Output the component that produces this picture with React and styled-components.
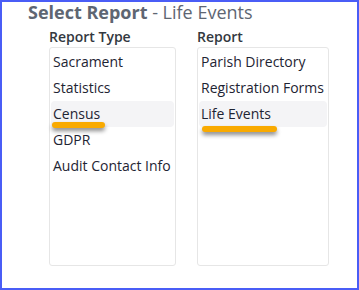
import React from "react";
import styled, { createGlobalStyle } from "styled-components";

const Global = createGlobalStyle`
  html, body { margin: 0; padding: 0; background: #fff; }
  body { font-family: "Open Sans", "Noto Sans", sans-serif; }
  * { box-sizing: border-box; }
`;

const Frame = styled.div`
  width: 359px;
  height: 290px;
  border: 2px solid #4a5df6;
  background: #fff;
  overflow: hidden;
`;

const Title = styled.h1`
  margin: 0 0 0 26px;
  font-size: 18px;
  line-height: 20px;
  font-weight: 400;
  color: #5e6672;
  white-space: nowrap;
`;

const TitleStrong = styled.span`
  font-weight: 700;
`;

const Columns = styled.div`
  display: flex;
  gap: 21px;
  margin: 5px 0 0 47px;
`;

const Column = styled.div`
  display: flex;
  flex-direction: column;
  width: ${(p) => p.$width}px;
`;

const Label = styled.div`
  font-size: 14px;
  line-height: 19px;
  font-weight: 600;
  color: #333840;
  margin-bottom: 1px;
`;

const ListBox = styled.div`
  height: 219px;
  border: 1px solid #e6e6e6;
  border-radius: 3px;
  padding: 1px;
  display: flex;
  flex-direction: column;
`;

const Item = styled.div`
  position: relative;
  height: 26px;
  padding: 3px 2px;
  font-size: 14px;
  line-height: 20px;
  color: #1e2433;
  border-radius: 4px;
  white-space: nowrap;
  background: ${(p) => (p.$selected ? "#f4f4f6" : "transparent")};
`;

const Marker = styled.span`
  position: absolute;
  left: ${(p) => p.$left}px;
  top: ${(p) => p.$top}px;
  width: ${(p) => p.$width}px;
  height: 6px;
  border-radius: 3px;
  background: #f9aa00;
  box-shadow: 0 3px 4px rgba(0, 0, 0, 0.45);
`;

const reportTypes = ["Sacrament", "Statistics", "Census", "GDPR", "Audit Contact Info"];
const reports = ["Parish Directory", "Registration Forms", "Life Events"];

export default function App() {
  return (
    <>
      <Global />
      <Frame>
        <Title>
          <TitleStrong>Select Report</TitleStrong> - Life Events
        </Title>
        <Columns>
          <Column $width={127}>
            <Label>Report Type</Label>
            <ListBox>
              {reportTypes.map((t) => (
                <Item key={t} $selected={t === "Census"}>
                  {t}
                  {t === "Census" && <Marker $left={1} $top={21} $width={53} />}
                </Item>
              ))}
            </ListBox>
          </Column>
          <Column $width={132}>
            <Label>Report</Label>
            <ListBox>
              {reports.map((t) => (
                <Item key={t} $selected={t === "Life Events"}>
                  {t}
                  {t === "Life Events" && <Marker $left={3} $top={25} $width={75} />}
                </Item>
              ))}
            </ListBox>
          </Column>
        </Columns>
      </Frame>
    </>
  );
}
